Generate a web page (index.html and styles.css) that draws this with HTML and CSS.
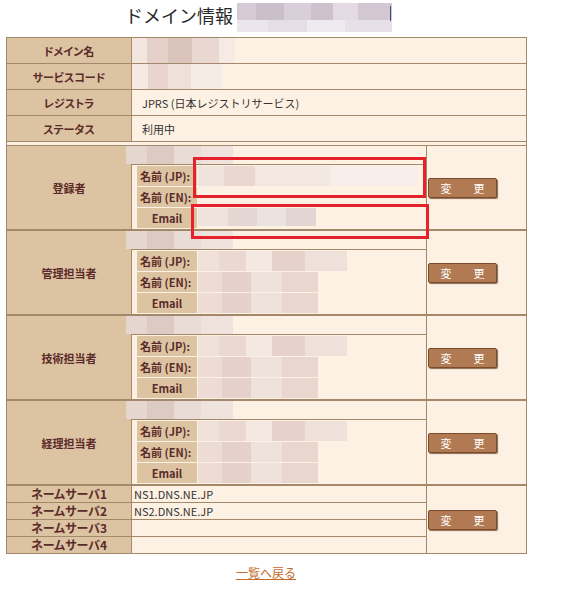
FILE: index.html
```html
<!DOCTYPE html>
<html lang="ja">
<head>
    <meta charset="UTF-8">
    <meta name="viewport" content="width=device-width, initial-scale=1.0">
    <title>ドメイン情報</title>
    <link rel="stylesheet" href="styles.css">
</head>
<body>
    <div class="page">
        <h1 class="title">ドメイン情報<span class="blur blur-title"></span></h1>

        <table class="info">
            <colgroup>
                <col class="c-label">
                <col class="c-detail">
                <col class="c-act">
            </colgroup>
            <tr class="row">
                <th>ドメイン名</th>
                <td colspan="2"><span class="blur blur-dom"></span></td>
            </tr>
            <tr class="row">
                <th>サービスコード</th>
                <td colspan="2"><span class="blur blur-svc"></span></td>
            </tr>
            <tr class="row">
                <th>レジストラ</th>
                <td colspan="2" class="txt">JPRS (日本レジストリサービス)</td>
            </tr>
            <tr class="row">
                <th>ステータス</th>
                <td colspan="2" class="txt">利用中</td>
            </tr>
            <tr class="gap"><td colspan="3"></td></tr>

            <tr class="contact">
                <th>登録者</th>
                <td class="detail">
                    <div class="handle"><span class="blur blur-id"></span></div>
                    <div class="sub">
                        <div class="sl">名前 (JP):</div><div class="sv"><span class="blur blur-long"></span></div>
                        <div class="sl">名前 (EN):</div><div class="sv"></div>
                        <div class="sl sl-mail">Email</div><div class="sv"><span class="blur blur-mid"></span></div>
                    </div>
                </td>
                <td class="act"><button class="btn">変　　更</button></td>
            </tr>
            <tr class="contact">
                <th>管理担当者</th>
                <td class="detail">
                    <div class="handle"><span class="blur blur-id"></span></div>
                    <div class="sub">
                        <div class="sl">名前 (JP):</div><div class="sv"><span class="blur blur-jp"></span></div>
                        <div class="sl">名前 (EN):</div><div class="sv"><span class="blur blur-en"></span></div>
                        <div class="sl sl-mail">Email</div><div class="sv"><span class="blur blur-en"></span></div>
                    </div>
                </td>
                <td class="act"><button class="btn">変　　更</button></td>
            </tr>
            <tr class="contact">
                <th>技術担当者</th>
                <td class="detail">
                    <div class="handle"><span class="blur blur-id"></span></div>
                    <div class="sub">
                        <div class="sl">名前 (JP):</div><div class="sv"><span class="blur blur-jp"></span></div>
                        <div class="sl">名前 (EN):</div><div class="sv"><span class="blur blur-en"></span></div>
                        <div class="sl sl-mail">Email</div><div class="sv"><span class="blur blur-en"></span></div>
                    </div>
                </td>
                <td class="act"><button class="btn">変　　更</button></td>
            </tr>
            <tr class="contact">
                <th>経理担当者</th>
                <td class="detail">
                    <div class="handle"><span class="blur blur-id"></span></div>
                    <div class="sub">
                        <div class="sl">名前 (JP):</div><div class="sv"><span class="blur blur-jp"></span></div>
                        <div class="sl">名前 (EN):</div><div class="sv"><span class="blur blur-en"></span></div>
                        <div class="sl sl-mail">Email</div><div class="sv"><span class="blur blur-en"></span></div>
                    </div>
                </td>
                <td class="act"><button class="btn">変　　更</button></td>
            </tr>

            <tr class="ns">
                <th>ネームサーバ1</th>
                <td>NS1.DNS.NE.JP</td>
                <td rowspan="4" class="act"><button class="btn">変　　更</button></td>
            </tr>
            <tr class="ns">
                <th>ネームサーバ2</th>
                <td>NS2.DNS.NE.JP</td>
            </tr>
            <tr class="ns">
                <th>ネームサーバ3</th>
                <td></td>
            </tr>
            <tr class="ns">
                <th>ネームサーバ4</th>
                <td></td>
            </tr>
        </table>

        <p class="back"><a href="#">一覧へ戻る</a></p>

        <!-- highlight marks drawn over the registrant block -->
        <div class="mark mark-name"></div>
        <div class="mark mark-mail"></div>
    </div>
</body>
</html>
```

FILE: styles.css
```css
body {
    margin: 0;
    font-family: "Noto Sans CJK JP", "Liberation Sans", sans-serif;
    background: #fff;
    color: #333;
}
.page {
    position: relative;
    width: 520px;
    margin-left: 6px;
}
.title {
    display: flex;
    align-items: flex-start;
    margin: 0;
    height: 37px;
    padding-left: 119px;
    font-size: 18px;
    font-weight: normal;
    line-height: 30px;
    color: #2a2a2a;
}
.blur {
    display: inline-block;
    vertical-align: top;
}
.blur-title {
    width: 155px;
    height: 29px;
    margin: 3px 0 0 4px;
    background:
        linear-gradient(#3a4a8a, #3a4a8a) 153px 3px / 1px 15px no-repeat,
        linear-gradient(90deg, #d6cad6 0 12%, #cbbfcc 12% 30%, #d9cfda 30% 48%, #cdc1ce 48% 62%, #e3dae4 62% 78%, #d3c7d4 78%) 0 0 / 100% 17px no-repeat,
        linear-gradient(90deg, #ece5ed 0 20%, #e6dee7 20% 45%, #efe9f0 45% 70%, #e8e0e9 70%) 0 17px / 100% 12px no-repeat;
}
.info {
    width: 520px;
    border-collapse: collapse;
    table-layout: fixed;
    background: #fdf1e3;
}
.c-label { width: 125px; }
.c-detail { width: 295px; }
.c-act { width: 100px; }
.info th,
.info td {
    border: 1px solid #a3896a;
    padding: 0;
}
.info th {
    background: #dcc3a1;
    color: #5b2b2b;
    font-size: 11px;
    font-weight: bold;
    font-feature-settings: "palt";
    text-align: center;
}
.row th,
.row td {
    height: 25px;
    font-size: 11px;
    vertical-align: middle;
}
.row .txt {
    padding-left: 10px;
}
.blur-dom {
    width: 103px;
    height: 25px;
    background: linear-gradient(90deg, #f3e6df 0 15%, #e4d0c8 15% 35%, #dac4bb 35% 58%, #e9d8d1 58% 84%, #f6ebe4 84%);
}
.blur-svc {
    width: 90px;
    height: 25px;
    background: linear-gradient(90deg, #f5e9e2 0 18%, #e8d6ce 18% 40%, #efe0d9 40% 66%, #f6ece6 66%);
}
.gap td {
    height: 3px;
}
.contact th {
    height: 83px;
    border-bottom: 2px solid #a3896a;
    font-size: 11px;
}
.contact td {
    border-bottom: 2px solid #a3896a;
}
.detail {
    vertical-align: top;
}
.handle {
    height: 18px;
}
.blur-id {
    width: 107px;
    height: 18px;
    margin-left: -6px;
    background: linear-gradient(90deg, #e6d6d0 0 20%, #dccac3 20% 45%, #e9dbd5 45% 70%, #efe3de 70%);
}
.sub {
    display: grid;
    grid-template-columns: 60px 1fr;
    row-gap: 1px;
    padding: 1px 3px 0 5px;
    border-top: 1px solid #a3896a;
}
.sl {
    height: 20px;
    line-height: 20px;
    background: #dcc3a1;
    color: #5b2b2b;
    font-size: 11px;
    font-weight: bold;
    font-feature-settings: "palt";
    padding-left: 3px;
    white-space: nowrap;
}
.sl-mail {
    padding-left: 0;
    text-align: center;
}
.sv {
    height: 20px;
    padding-left: 1px;
}
.blur-jp {
    width: 149px;
    height: 20px;
    background: linear-gradient(90deg, #f1e1db 0 14%, #ead8d1 14% 32%, #f4e8e2 32% 50%, #e6d2cb 50% 72%, #efe0da 72%);
}
.blur-en {
    width: 120px;
    height: 20px;
    background: linear-gradient(90deg, #eddcd6 0 20%, #e5d1ca 20% 44%, #efe1db 44% 70%, #e8d6cf 70%);
}
.blur-long {
    width: 220px;
    height: 20px;
    background: linear-gradient(90deg, #f0e2dc 0 12%, #e9d7d0 12% 26%, #f3e7e2 26% 60%, #f7eee9 60%);
}
.blur-mid {
    width: 118px;
    height: 18px;
    background: linear-gradient(90deg, #efe3de 0 25%, #e4d6d2 25% 50%, #ece2de 50% 75%, #e2d6d3 75%);
}
.act {
    vertical-align: middle;
    padding-left: 1px !important;
}
.btn {
    display: block;
    width: 69px;
    height: 20px;
    padding: 0;
    background: #b27a52;
    border: 1px solid #7a4c2c;
    border-radius: 2px;
    box-shadow: 1px 1px 1px #8a6a50;
    color: #fff;
    font-family: inherit;
    font-size: 11px;
    line-height: 18px;
    cursor: pointer;
}
.ns th,
.ns td {
    height: 16px;
    line-height: 16px;
}
.ns th {
    font-size: 12px;
}
.ns td {
    font-size: 11px;
    padding-left: 2px;
    color: #333;
}
.back {
    margin: 11px 0 0;
    text-align: center;
    font-size: 12px;
    line-height: 16px;
}
.back a {
    color: #c46a2a;
}
.mark {
    position: absolute;
    border: 3px solid #e5212b;
}
.mark-name {
    left: 187px;
    top: 157px;
    width: 227px;
    height: 35px;
}
.mark-mail {
    left: 185px;
    top: 204px;
    width: 232px;
    height: 29px;
}
```
